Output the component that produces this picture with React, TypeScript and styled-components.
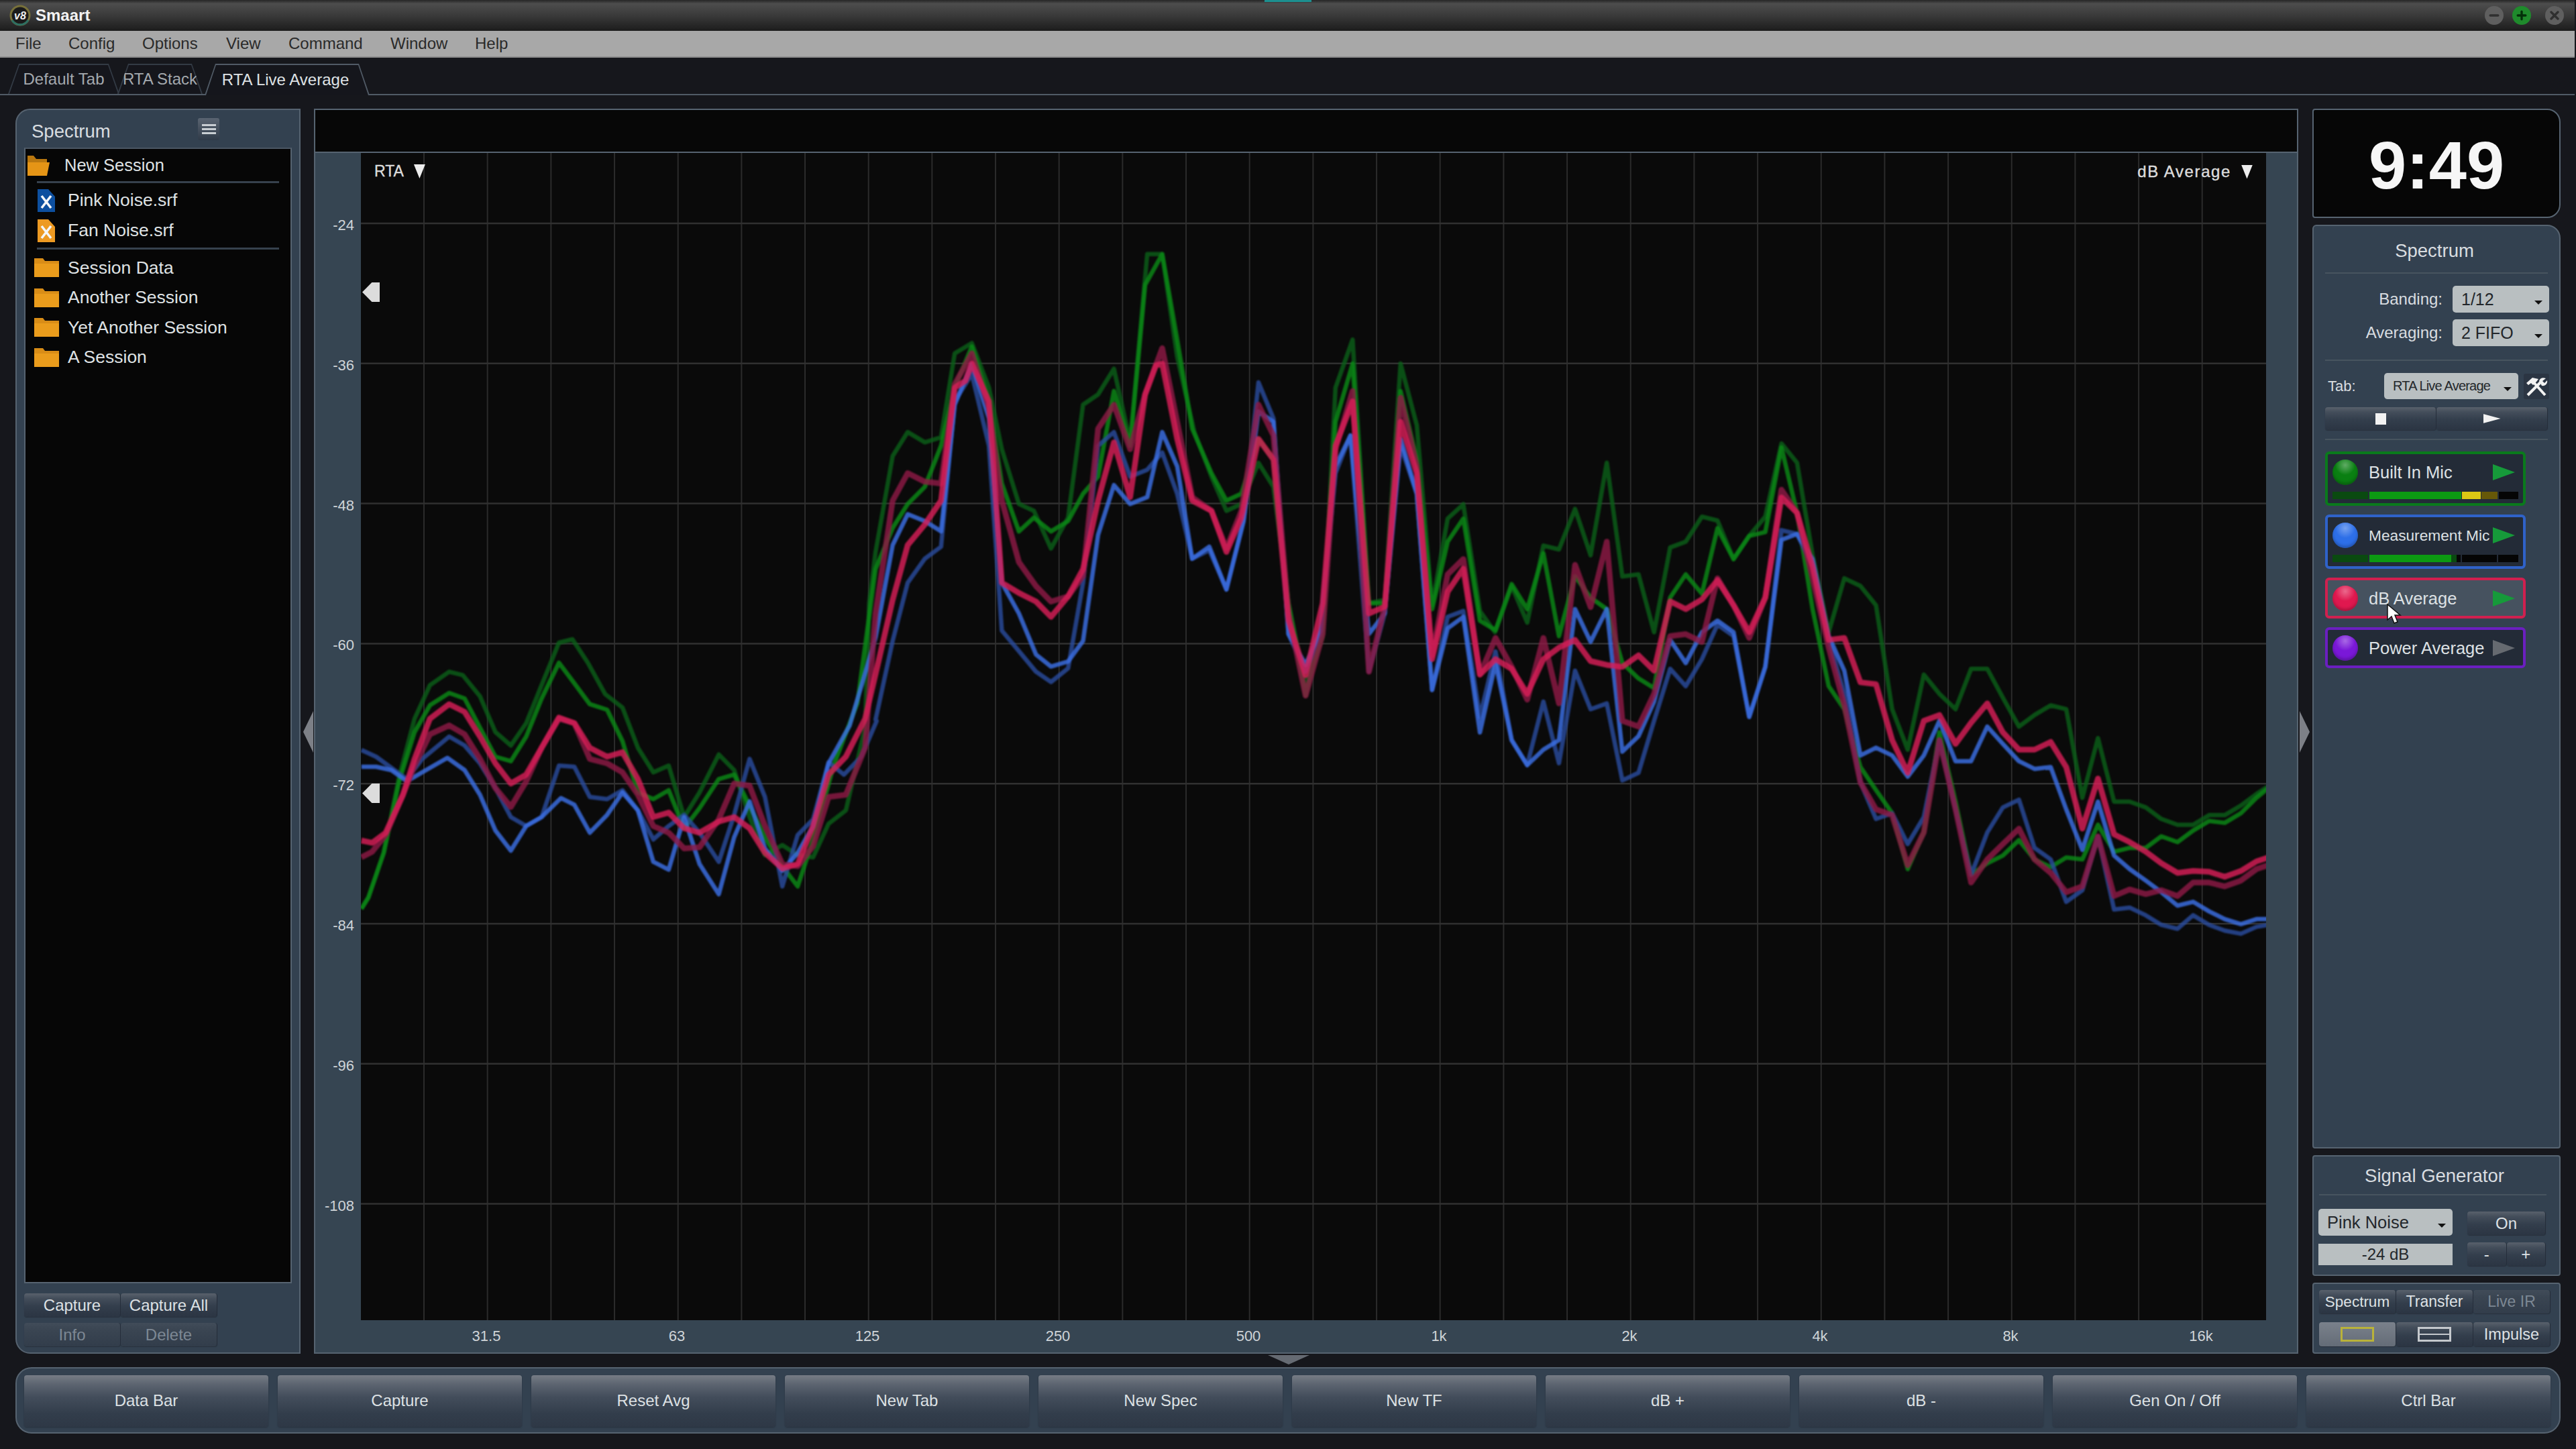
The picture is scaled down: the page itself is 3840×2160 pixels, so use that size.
import React from "react";
import styled, {createGlobalStyle} from "styled-components";
import {Minus, Plus, X} from "lucide-react";

const GlobalStyle = createGlobalStyle`
  html, body {
    margin: 0;
    padding: 0;
    width: 3840px;
    height: 2160px;
    overflow: hidden;
    background: #16171c;
    font-family: "Liberation Sans", Arial, sans-serif;
    color: #d9dde0;
  }
  * { box-sizing: border-box; }
`;

const panelBg = "#334150";
const panelLine = "#566370";

const Shell = styled.div`
  position: relative;
  width: 3840px;
  height: 2160px;
  display: flex;
  flex-direction: column;
  background: #16171c;
`;

const TitleBar = styled.div`
  position: relative;
  height: 46px;
  width: 3838px;
  display: flex;
  align-items: center;
  padding-left: 14px;
  background: linear-gradient(#262626 0%, #4d4d4d 12%, #3a3a3a 50%, #1c1c1c 100%);
`;

const TealMark = styled.div`
  position: absolute;
  left: 1885px;
  top: 0;
  width: 70px;
  height: 3px;
  background: #1c8f8f;
`;

const AppName = styled.div`
  margin-left: 7px;
  font-size: 24px;
  font-weight: 700;
  color: #f2f2f2;
`;

const WindowButtons = styled.div`
  margin-left: auto;
  display: flex;
  align-items: center;
  margin-right: 16px;
`;

const WindowButton = styled.div<{ $green?: boolean; $gap: number }>`
  width: 28px;
  height: 28px;
  margin-left: ${p => p.$gap}px;
  border-radius: 50%;
  display: flex;
  align-items: center;
  justify-content: center;
  background: ${p => p.$green ? "#1f8a2c" : "#5f5f5f"};
  color: ${p => p.$green ? "#04300a" : "#2f2f2f"};
`;

const MenuBar = styled.div`
  height: 40px;
  width: 3838px;
  display: flex;
  align-items: center;
  padding-left: 23px;
  background: #a8a8a8;
  border-bottom: 2px solid #8d8d8d;
  color: #2a2a2a;
  font-size: 24px;
`;

const MenuItem = styled.span<{ $w: number }>`
  width: ${p => p.$w}px;
`;

const TabRow = styled.div`
  height: 56px;
  width: 3838px;
  padding: 9px 0 0 12px;
  display: flex;
  border-bottom: 2px solid #515b66;
`;

const Tab = styled.div<{ $w: number; $gap?: number; $active?: boolean }>`
  position: relative;
  width: ${p => p.$w}px;
  margin-left: ${p => p.$gap || 0}px;
  height: ${p => p.$active ? 47 : 45}px;
  padding-right: ${p => p.$active ? 5 : 0}px;
  display: flex;
  align-items: center;
  justify-content: center;
  font-size: 24px;
  color: ${p => p.$active ? "#dfe2e5" : "#a4a9ae"};
  background: ${p => p.$active ? "#515b66" : "#333b45"};
  clip-path: polygon(16px 0, calc(100% - 16px) 0, 100% 100%, 0 100%);

  &::before {
    content: "";
    position: absolute;
    inset: 2px 2px 0 2px;
    background: #15161c;
    clip-path: polygon(15px 0, calc(100% - 15px) 0, 100% 100%, 0 100%);
  }

  span {
    position: relative;
  }
`;

const Main = styled.div`
  position: relative;
  margin: 20px 0 0 23px;
  width: 3794px;
  height: 1856px;
  display: flex;
`;

const SidePanel = styled.div`
  width: 425px;
  display: flex;
  flex-direction: column;
  padding: 0 11px 9px;
  background: ${panelBg};
  border: 2px solid ${panelLine};
  border-radius: 22px 0 0 22px;
`;

const SideHeader = styled.div`
  height: 56px;
  flex: none;
  display: flex;
  align-items: center;
  padding-left: 11px;
  font-size: 27.5px;
  position: relative;

  span {
    padding-top: 7px;
  }
`;

const HeaderMenu = styled.div`
  position: absolute;
  left: 259px;
  top: 12px;
  width: 32px;
  height: 33px;
  border-radius: 3px;
  background: linear-gradient(#5a6471, #2f3a48);
  display: flex;
  flex-direction: column;
  justify-content: center;
  align-items: center;
  gap: 3px;

  i {
    display: block;
    width: 21px;
    height: 3px;
    background: #c9ced3;
  }
`;

const SessionList = styled.div`
  flex: 1;
  background: #060606;
  border: 2px solid ${panelLine};
  border-top-color: #4a5663;
`;

const ListRow = styled.div<{ $h: number; $pad: number; $gap: number; $size?: number }>`
  height: ${p => p.$h}px;
  padding-left: ${p => p.$pad}px;
  display: flex;
  align-items: center;
  gap: ${p => p.$gap}px;
  font-size: ${p => p.$size || 26.5}px;
  color: #dfe2e4;

  svg {
    flex: none;
  }
`;

const ListDivider = styled.div<{ $top?: number; $bottom?: number }>`
  height: 3px;
  margin: ${p => p.$top || 0}px 17px ${p => p.$bottom || 0}px;
  background: #36414d;
`;

const SideFooter = styled.div`
  flex: none;
  padding-top: 15px;
  display: grid;
  grid-template-columns: 144px 144px;
  grid-auto-rows: 35px;
  row-gap: 9px;
`;

const Btn = styled.div<{ $dim?: boolean; $size?: number }>`
  display: flex;
  align-items: center;
  justify-content: center;
  font-size: ${p => p.$size || 24}px;
  color: ${p => p.$dim ? "#7d8894" : "#dde1e4"};
  border-radius: 4px;
  border-right: 1px solid #252e3a;
  background: linear-gradient(#59616c 0%, #434d5a 22%, #333e4c 55%, #2b3543 100%);
  box-shadow: 0 1px 1px #28313c;
`;

const DimBtn = styled(Btn)`
  background: linear-gradient(#414c59 0%, #3a4552 30%, #323d4b 100%);
`;

const PlotPanel = styled.div`
  width: 2958px;
  margin-left: 20px;
  display: flex;
  flex-direction: column;
  background: #364552;
  border: 2px solid ${panelLine};
`;

const PlotHead = styled.div`
  height: 64px;
  flex: none;
  background: #070707;
  border-bottom: 2px solid ${panelLine};
`;

const PlotBody = styled.div`
  height: 1740px;
  flex: none;
  display: flex;
`;

const YAxis = styled.div`
  width: 68px;
  flex: none;
  padding: 0.6px 10px 0 0;
`;

const YLabel = styled.div`
  height: 208.8px;
  padding-top: 6px;
  display: flex;
  align-items: center;
  justify-content: flex-end;
  font-size: 22px;
  color: #cfd4d8;
`;

const Chart = styled.div`
  position: relative;
  width: 2840px;
  flex: none;
  background: #0a0a0a;

  svg {
    display: block;
  }
`;

const TraceGroup = styled.g`
  filter: blur(0.8px);
`;

const ChartTag = styled.div<{ $right?: boolean }>`
  position: absolute;
  top: 14px;
  ${p => p.$right
    ? "right: 20px; font-size: 24px; letter-spacing: 1.6px;"
    : "left: 20px; font-size: 23px;"}
  display: flex;
  align-items: center;
  gap: 15px;
  color: #dcdcdc;
  -webkit-text-stroke: 0.4px #dcdcdc;
`;

const DownTriangle = styled.i`
  display: block;
  width: 17px;
  height: 21px;
  background: #ededed;
  clip-path: polygon(0 0, 100% 0, 50% 100%);
`;

const ThresholdMarker = styled.div<{ $top: number }>`
  position: absolute;
  left: 2px;
  top: ${p => p.$top}px;
  width: 26px;
  height: 29px;
  background: #dcdcdc;
  clip-path: polygon(55% 0, 100% 0, 100% 100%, 55% 100%, 0 50%);
`;

const XAxis = styled.div`
  flex: 1;
  padding-left: 113px;
  display: flex;
  align-items: center;
`;

const XLabel = styled.div`
  width: 284px;
  flex: none;
  text-align: center;
  font-size: 22px;
  color: #cfd4d8;
`;

const RightColumn = styled.div`
  width: 370px;
  margin-left: 21px;
  display: flex;
  flex-direction: column;
  gap: 10px;
`;

const ClockPanel = styled.div`
  height: 163px;
  flex: none;
  display: flex;
  align-items: center;
  justify-content: center;
  background: #060606;
  border: 2px solid ${panelLine};
  border-radius: 4px 20px 20px 4px;
  font-size: 101px;
  font-weight: 700;
  color: #f6f6f6;
  padding-top: 6px;
`;

const InfoPanel = styled.div<{ $h?: number; $corners?: string }>`
  ${p => p.$h ? `height: ${p.$h}px; flex: none;` : "flex: 1;"}
  display: flex;
  flex-direction: column;
  background: ${panelBg};
  border: 2px solid ${panelLine};
  border-radius: ${p => p.$corners || "4px"};
`;

const PanelBody = styled.div`
  padding: 0 17px;
  display: flex;
  flex-direction: column;
`;

const PanelTitle = styled.div<{ $h: number; $size: number }>`
  height: ${p => p.$h}px;
  flex: none;
  padding: 4px 6px 0 0;
  display: flex;
  align-items: center;
  justify-content: center;
  font-size: ${p => p.$size}px;
  color: #d9dde0;
`;

const Rule = styled.div<{ $before?: number; $after: number }>`
  height: 2px;
  flex: none;
  margin-top: ${p => p.$before || 0}px;
  margin-bottom: ${p => p.$after}px;
  background: #47545f;
`;

const GenRule = styled(Rule)`
  margin-left: 8px;
  margin-right: 19px;
`;

const SelectRow = styled.div<{ $h?: number }>`
  display: flex;
  align-items: center;
  justify-content: flex-end;
  height: ${p => p.$h || 40}px;
  flex: none;
  margin-bottom: 10px;
  margin-right: -2px;
  font-size: 24px;
`;

const Select = styled.div<{ $w: number; $size?: number; $h?: number }>`
  position: relative;
  width: ${p => p.$w}px;
  height: ${p => p.$h ? `${p.$h}px` : "100%"};
  flex: none;
  padding-left: 13px;
  display: flex;
  align-items: center;
  background: #b9bfc1;
  border-radius: 5px;
  color: #23272b;
  font-size: ${p => p.$size || 25}px;

  &::after {
    content: "";
    position: absolute;
    right: 10px;
    top: 54%;
    border: 6px solid transparent;
    border-top: 6px solid #111;
    border-bottom: 0;
  }
`;

const TabSelect = styled(Select)`
  letter-spacing: -0.8px;
`;

const RowLabel = styled.span`
  margin-right: 15px;
`;

const TabLabel = styled.span`
  font-size: 22px;
  width: 88px;
  padding-left: 4px;
`;

const ToolButton = styled.div`
  width: 38px;
  height: 38px;
  margin-left: 8px;
  flex: none;
  display: flex;
  align-items: center;
  justify-content: center;
  background: #2b3543;
  border-radius: 3px;
`;

const Transport = styled.div`
  height: 34px;
  margin: 2px 0 13px;
  flex: none;
  display: grid;
  grid-template-columns: 1fr 1fr;
`;

const StopGlyph = styled.i`
  display: block;
  width: 16px;
  height: 17px;
  background: #f2f2f2;
`;

const PlayGlyph = styled.i`
  display: block;
  width: 26px;
  height: 14px;
  background: #f2f2f2;
  clip-path: polygon(0 0, 100% 50%, 0 100%);
`;

const ChannelList = styled.div`
  display: flex;
  flex-direction: column;
  gap: 13px;
  margin-top: 17px;
`;

const Channel = styled.div<{ $color: string; $hover?: boolean; $h: number }>`
  position: relative;
  width: 299px;
  height: ${p => p.$h}px;
  padding: 8px 7px 0;
  border: 4px solid ${p => p.$color};
  border-radius: 6px;
  background: ${p => p.$hover ? "#46525f" : "#232b37"};
`;

const ChannelTop = styled.div`
  display: flex;
  align-items: center;
  height: 38px;
`;

const ChannelDot = styled.div<{ $color: string }>`
  width: 38px;
  height: 38px;
  flex: none;
  border-radius: 50%;
  background: radial-gradient(circle at 50% 22%, rgba(255, 255, 255, .35) 0%, rgba(255, 255, 255, 0) 42%), ${p => p.$color};
  box-shadow: inset 0 -3px 4px rgba(0, 0, 0, .25);
`;

const ChannelName = styled.div<{ $tight?: boolean }>`
  margin-left: 16px;
  font-size: ${p => p.$tight ? 22.7 : 25.5}px;
  white-space: nowrap;
  color: #dde1e4;
`;

const ChannelPlay = styled.div<{ $off?: boolean }>`
  position: absolute;
  left: 246px;
  top: 15px;
  width: 33px;
  height: 24px;
  background: ${p => p.$off ? "#666a70" : "#169a3a"};
  clip-path: polygon(0 0, 100% 50%, 0 100%);
`;

const Meter = styled.div`
  margin-top: 10px;
  height: 11px;
  display: flex;
`;

const MeterSeg = styled.div<{ $w: number; $c: string; $gap?: number }>`
  width: ${p => p.$w}px;
  margin-left: ${p => p.$gap || 0}px;
  background: ${p => p.$c};
  flex: none;
`;

const Pointer = styled.svg`
  position: absolute;
  left: 87px;
  top: 35px;
`;

const GenBody = styled.div`
  margin-top: 20px;
  padding-left: 7px;
  display: flex;
`;

const GenLeft = styled.div`
  width: 200px;
  display: flex;
  flex-direction: column;
`;

const GenRight = styled.div`
  width: 117px;
  margin: 4px 0 0 22px;
  display: grid;
  grid-template-columns: 1fr 1fr;
  grid-template-rows: 35px 35px;
  row-gap: 11px;
`;

const GenValue = styled.div`
  height: 32px;
  margin-top: 12px;
  display: flex;
  align-items: center;
  justify-content: center;
  background: #b9bfc1;
  color: #23272b;
  font-size: 24px;
`;

const WideBtn = styled(Btn)`
  grid-column: span 2;
`;

const ModeGrid = styled.div`
  margin: 9px 0 0 8px;
  width: 345px;
  display: grid;
  grid-template-columns: repeat(3, 115px);
  grid-template-rows: 35px 36px;
  row-gap: 13px;
`;

const ActiveBtn = styled(Btn)`
  background: linear-gradient(#7a818b, #646c77);
`;

const LayoutRect = styled.div<{ $active?: boolean; $split?: boolean }>`
  width: 50px;
  height: 22px;
  border: 3px solid ${p => p.$active ? "#b9b23a" : "#c4c8cc"};
  background: ${p => p.$split
    ? "linear-gradient(transparent 7px, #c4c8cc 7px, #c4c8cc 9px, transparent 9px)"
    : "transparent"};
`;

const BottomBar = styled.div`
  margin: 20px 0 0 23px;
  width: 3794px;
  height: 99px;
  padding: 10px 13px 0 11px;
  background: ${panelBg};
  border: 2px solid ${panelLine};
  border-radius: 24px;
  display: grid;
  grid-template-columns: repeat(10, 1fr);
  column-gap: 14px;
`;

const BarBtn = styled.div`
  height: 77px;
  padding-bottom: 2px;
  display: flex;
  align-items: center;
  justify-content: center;
  font-size: 24px;
  color: #dde1e4;
  border-radius: 4px;
  background: linear-gradient(#767c85 0%, #5c6470 18%, #434d5b 42%, #323d4b 75%, #2e3846 100%);
  box-shadow: 0 1px 2px #28313c;
`;

const SideArrow = styled.div<{ $left: number; $flip?: boolean }>`
  position: absolute;
  left: ${p => p.$left}px;
  top: 898px;
  width: 15px;
  height: 62px;
  background: #7d8087;
  clip-path: ${p => p.$flip
    ? "polygon(0 0, 100% 50%, 0 100%)"
    : "polygon(100% 0, 100% 100%, 0 50%)"};
`;

const BottomArrow = styled.div`
  position: absolute;
  left: 1867px;
  top: 1858px;
  width: 62px;
  height: 14px;
  background: #666b73;
  clip-path: polygon(0 0, 100% 0, 50% 100%);
`;

// traces were read off three crops of the plot, so each crop keeps its own offset + scale
const crops = {
  a: {x: 440, y: 900, sx: 1.742, sy: 3},
  b: {x: 1200, y: 340, sx: 1.568, sy: 1.96},
  c: {x: 2100, y: 600, sx: 1.206, sy: 1.742},
};

const toPage = (raw: string, c: { x: number; y: number; sx: number; sy: number }) =>
  raw.trim().split(/\s+/).map(pair => {
    const [px, py] = pair.split(",").map(Number);
    return `${(c.x + px / c.sx).toFixed(1)},${(c.y + py / c.sy).toFixed(1)}`;
  }).join(" ");

const trace = (a: string, b: string, c: string) =>
  [toPage(a, crops.a), toPage(b, crops.b), toPage(c, crops.c)].join(" ");

const traces = [
  {
    color: "#0b5f18", width: 6.5, points: trace(
      "172,1370 190,1320 230,1120 270,780 310,520 350,370 400,310 435,325 480,420 520,580 560,640 600,540 640,370 685,180 720,165 760,270 805,410 850,470 890,650 930,760 970,730 1010,960 1050,850 1100,680 1140,750 1180,960 1220,1130 1265,1085 1305,1130 1345,1140 1385,990 1430,930 1480,560",
      "150,1100 165,950 205,670 240,600 280,630 318,615 350,370 390,340 430,470 460,650 500,810 535,830 575,940 615,850 650,520 685,490 722,415 760,630 800,80 835,80 870,380 910,600 950,730 985,830 1020,810 1060,690 1095,760 1130,1100 1170,1340 1210,1200 1240,470 1280,330 1318,1100 1355,1090 1392,400 1430,580",
      "42,530 70,305 98,268 128,545 155,600 185,480 213,575 242,375 270,385 299,280 327,400 356,160 384,455 413,450 441,600 470,380 498,365 527,300 555,310 584,410 612,350 641,300 670,110 698,160 726,400 755,600 783,460 812,480 840,530 869,800 897,905 926,710 954,760 983,800 1011,695 1040,695 1068,770 1097,845 1125,815 1154,790 1182,800 1211,1030 1239,875 1268,1040 1296,1040 1325,1055 1353,1085 1382,1100 1410,1100 1439,1075 1467,1075 1496,1050 1524,1020 1545,1000"
    )
  },
  {
    color: "#0b8a16", width: 6.5, points: trace(
      "172,1370 190,1320 230,1120 270,800 310,580 350,460 400,405 440,430 480,560 520,690 560,710 600,600 640,430 685,270 720,350 765,455 810,480 850,620 890,850 930,880 970,840 1010,1010 1050,920 1100,790 1140,770 1180,910 1220,1050 1265,1180 1305,1270 1345,1060 1400,720 1460,450",
      "165,1000 205,880 240,810 280,760 318,640 350,470 390,350 430,510 460,750 500,890 535,850 575,890 615,860 650,780 685,730 722,480 760,640 795,170 835,80 870,330 905,590 950,720 985,800 1020,780 1060,620 1095,680 1130,1100 1170,1370 1210,1170 1240,570 1280,400 1318,1100 1355,1100 1392,480 1430,680",
      "42,540 70,365 98,305 128,570 156,595 185,475 213,540 242,395 270,610 299,455 327,510 356,540 384,680 413,720 441,745 470,510 498,450 527,500 555,330 584,410 612,350 641,340 670,120 698,290 726,540 755,740 783,800 812,950 840,1010 869,1070 897,1215 926,1120 954,860 983,1040 1011,1230 1040,1200 1068,1180 1097,1140 1125,1190 1154,1210 1182,1185 1211,1190 1239,1100 1268,1170 1296,1160 1325,1160 1353,1130 1382,1145 1410,1115 1439,1090 1467,1095 1496,1070 1524,1030 1545,1005"
    )
  },
  {
    color: "#2a4c9e", width: 6.5, points: trace(
      "172,660 210,690 250,740 290,790 330,700 400,600 440,640 480,720 520,830 560,960 600,1000 640,960 685,730 725,735 765,870 810,880 850,840 890,930 930,1060 970,1000 1010,950 1050,1030 1100,1160 1140,950 1180,700 1220,870 1265,1270 1305,1040 1345,970 1385,715 1425,770 1470,690 1510,530",
      "165,1440 205,1210 240,1040 280,970 318,935 350,510 390,430 430,640 460,1180 500,1240 540,1300 575,1330 615,1290 650,1040 685,640 722,600 760,730 800,710 835,660 870,780 905,970 945,945 985,1060 1025,860 1060,455 1095,560 1130,1190 1170,1300 1205,1190 1240,720 1275,610 1318,1300 1355,1130 1392,640 1430,780",
      "42,750 70,560 98,545 128,820 156,650 185,880 213,945 242,780 270,940 299,700 327,800 356,785 384,985 413,965 441,830 470,695 498,740 527,670 555,580 584,610 612,820 641,690 670,335 698,345 726,430 755,620 783,760 812,990 840,1085 869,1070 897,1150 926,1080 954,880 983,1060 1011,1230 1040,1120 1068,1055 1097,1035 1125,1160 1154,1190 1182,1300 1211,1270 1239,1130 1268,1320 1296,1315 1325,1335 1353,1360 1382,1370 1410,1335 1439,1360 1467,1375 1496,1383 1524,1365 1545,1360"
    )
  },
  {
    color: "#3c70e6", width: 6.5, points: trace(
      "172,735 210,735 250,750 290,800 330,760 395,695 440,750 480,860 520,1020 560,1110 600,1000 640,960 690,875 725,905 765,1030 810,950 850,850 890,930 930,1160 970,1195 1010,960 1050,1170 1100,1305 1140,1050 1180,890 1220,1100 1265,1200 1305,1120 1345,1000 1385,720 1440,550 1500,200",
      "165,1200 205,930 240,840 280,860 318,890 350,520 390,400 430,560 460,1040 500,1130 540,1250 575,1285 615,1270 650,1210 685,900 722,755 760,810 800,790 835,600 870,700 905,970 945,935 985,1060 1025,860 1060,540 1095,570 1130,1190 1170,1280 1205,1180 1240,700 1275,610 1318,1190 1355,1130 1392,620 1430,780",
      "42,750 70,590 98,560 128,860 156,680 185,880 213,945 242,905 270,880 299,540 327,625 356,540 384,910 413,870 441,780 470,620 498,680 527,600 555,570 584,600 612,820 641,690 670,360 698,345 726,410 755,610 783,700 812,920 840,900 869,920 897,975 926,920 954,830 983,935 1011,935 1040,845 1068,890 1097,935 1125,955 1154,950 1182,1060 1211,1165 1239,1040 1268,1180 1296,1215 1325,1245 1353,1275 1382,1310 1410,1300 1439,1325 1467,1345 1496,1358 1524,1345 1545,1345"
    )
  },
  {
    color: "#8e1a45", width: 8.5, points: trace(
      "172,1140 200,1115 235,1040 280,860 310,730 350,590 400,550 440,590 480,700 520,830 560,915 600,800 640,650 685,520 725,540 765,700 810,720 850,760 890,860 930,1000 970,1030 1010,1100 1050,1095 1100,970 1140,810 1180,820 1220,1000 1265,1170 1305,1180 1345,1090 1385,870 1430,860 1480,650",
      "165,1130 205,800 240,720 280,745 318,750 350,460 390,370 430,530 460,800 500,980 540,1050 575,1095 615,1080 650,1020 685,590 722,520 760,650 795,490 835,355 870,570 905,790 950,830 985,940 1020,830 1060,520 1095,610 1130,1130 1170,1370 1210,1190 1240,650 1280,480 1318,1300 1355,1110 1392,500 1430,700",
      "42,660 70,450 98,410 128,710 156,615 185,690 213,775 242,615 270,785 299,425 327,535 356,365 384,830 413,845 441,760 470,610 498,605 527,625 555,460 584,530 612,615 641,510 670,230 698,290 726,460 755,640 783,790 812,990 840,1060 869,1075 897,1205 926,1120 954,880 983,1060 1011,1250 1040,1190 1068,1150 1097,1110 1125,1190 1154,1225 1182,1275 1211,1260 1239,1130 1268,1285 1296,1268 1325,1280 1353,1270 1382,1285 1410,1250 1439,1250 1467,1260 1496,1245 1524,1215 1545,1205"
    )
  },
  {
    color: "#d81e58", width: 8.5, points: trace(
      "172,1065 200,1075 235,1030 280,860 310,700 350,520 400,455 440,490 480,600 520,720 560,810 600,770 640,650 685,515 725,540 765,650 810,690 850,670 890,790 930,960 970,940 1010,1010 1050,1030 1100,980 1140,960 1180,1010 1220,1120 1265,1190 1305,1170 1345,1000 1385,770 1430,690 1480,520",
      "170,1280 205,1090 240,930 280,870 318,800 350,470 375,450 390,400 430,510 460,1040 500,1070 540,1095 575,1140 615,1080 650,1000 685,800 722,630 760,790 795,490 820,405 835,400 870,620 905,800 950,830 985,950 1020,850 1060,620 1095,680 1130,1150 1170,1310 1210,1100 1240,640 1280,510 1318,1130 1355,1110 1392,570 1430,720",
      "42,670 70,495 98,435 128,710 156,670 185,695 213,760 242,670 270,640 299,620 327,675 356,685 384,690 413,660 441,700 470,520 498,540 527,515 555,465 584,530 612,600 641,510 670,250 698,290 726,430 755,620 783,615 812,730 840,735 869,880 897,965 926,830 954,815 983,890 1011,835 1040,785 1068,860 1097,905 1125,905 1154,885 1182,950 1211,1110 1239,980 1268,1125 1296,1145 1325,1170 1353,1200 1382,1225 1410,1220 1439,1222 1467,1235 1496,1220 1524,1195 1545,1185"
    )
  },
];

const dbLabels = ["-24", "-36", "-48", "-60", "-72", "-84", "-96", "-108"];
const freqLabels = ["31.5", "63", "125", "250", "500", "1k", "2k", "4k", "8k", "16k"];
const barButtons = ["Data Bar", "Capture", "Reset Avg", "New Tab", "New Spec", "New TF", "dB +", "dB -", "Gen On / Off", "Ctrl Bar"];
const menus: [string, number][] = [["File", 79], ["Config", 110], ["Options", 125], ["View", 93], ["Command", 152], ["Window", 126], ["Help", 80]];
const folders = ["Session Data", "Another Session", "Yet Another Session", "A Session"];

const gridX = Array.from({length: 29}, (_, i) => 632 + i * 94.67);
const gridY = dbLabels.map((_, i) => 335 + i * 208.8);

const Logo = () => (
  <svg width="32" height="34" viewBox="0 0 32 34">
    <circle cx="16" cy="17" r="14" fill="#1b1b1b" stroke="#77703a" strokeWidth="3"/>
    <path d="M4 24a14 14 0 0 0 24 0" fill="none" stroke="#2c6f63" strokeWidth="3"/>
    <text x="16" y="23" textAnchor="middle" fontSize="16" fontStyle="italic" fontWeight="700" fill="#eee">v8</text>
  </svg>
);

const OpenFolder = () => (
  <svg width="35" height="33" viewBox="0 0 35 33">
    <path d="M1 2h9l4 5h16v6H1z" fill="#b9770f"/>
    <path d="M1 32V12h33l-4 20z" fill="#e59516"/>
  </svg>
);

const ClosedFolder = () => (
  <svg width="39" height="30" viewBox="0 0 39 30">
    <path d="M1 1h13l3 4h21v24H1z" fill="#d98d17"/>
    <path d="M1 9h37v20H1z" fill="#ea9c1c"/>
  </svg>
);

const SessionFile = ({color}: { color: string }) => (
  <svg width="28" height="36" viewBox="0 0 28 36">
    <path d="M1 1h16l10 11v23H1z" fill={color}/>
    <path d="M7 11l14 18M21 11L7 29" stroke="#f4f6f8" strokeWidth="3.6" fill="none"/>
  </svg>
);

const ToolsIcon = () => (
  <svg width="34" height="30" viewBox="0 0 34 30">
    <path d="M12 8l18 20" stroke="#f2f2f2" strokeWidth="4" fill="none"/>
    <path d="M2 10l9-8 9 2-3 4-5 5-3-3-4 3z" fill="#f2f2f2"/>
    <path d="M4 28L24 8" stroke="#f2f2f2" strokeWidth="4" fill="none"/>
    <path d="M21 7c1-4 5-6 10-4l-5 4 3 3 4-4c1 5-3 9-8 8z" fill="#f2f2f2"/>
  </svg>
);

function Plot() {
  return (
    <svg width="2840" height="1740" viewBox="538 230 2840 1740">
      {gridX.map(x => <line key={x} x1={x} x2={x} y1={230} y2={1970} stroke="#2b2b2b" strokeWidth="2"/>)}
      {gridY.map(y => <line key={y} x1={538} x2={3378} y1={y} y2={y} stroke="#303030" strokeWidth="2.5"/>)}
      <TraceGroup>
        {traces.map(t => (
          <polyline key={t.color} points={t.points} fill="none" stroke={t.color} strokeWidth={t.width}
                    strokeLinejoin="round" opacity="0.82"/>
        ))}
      </TraceGroup>
    </svg>
  );
}

function App() {
  return <Shell>
    <GlobalStyle/>
    <TitleBar>
      <TealMark/>
      <Logo/>
      <AppName>Smaart</AppName>
      <WindowButtons>
        <WindowButton $gap={0}><Minus size={20} strokeWidth={4}/></WindowButton>
        <WindowButton $gap={13} $green><Plus size={20} strokeWidth={4}/></WindowButton>
        <WindowButton $gap={21}><X size={20} strokeWidth={4}/></WindowButton>
      </WindowButtons>
    </TitleBar>
    <MenuBar>
      {menus.map(([name, w]) => <MenuItem key={name} $w={w}>{name}</MenuItem>)}
    </MenuBar>
    <TabRow>
      <Tab $w={166}><span>Default Tab</span></Tab>
      <Tab $w={127} $gap={-3}><span>RTA Stack</span></Tab>
      <Tab $w={246} $gap={3} $active><span>RTA Live Average</span></Tab>
    </TabRow>

    <Main>
      <SidePanel>
        <SideHeader>
          <span>Spectrum</span>
          <HeaderMenu><i/><i/><i/></HeaderMenu>
        </SideHeader>
        <SessionList>
          <ListRow $h={48} $pad={2} $gap={21} $size={25.5}><OpenFolder/>New Session</ListRow>
          <ListDivider $bottom={3}/>
          <ListRow $h={45} $pad={17} $gap={18}><SessionFile color="#0d4f9f"/>Pink Noise.srf</ListRow>
          <ListRow $h={45} $pad={17} $gap={18}><SessionFile color="#ed9a22"/>Fan Noise.srf</ListRow>
          <ListDivider $top={3} $bottom={5}/>
          {folders.map(name => (
            <ListRow key={name} $h={44.5} $pad={12} $gap={12}><ClosedFolder/>{name}</ListRow>
          ))}
        </SessionList>
        <SideFooter>
          <Btn>Capture</Btn>
          <Btn>Capture All</Btn>
          <DimBtn $dim>Info</DimBtn>
          <DimBtn $dim>Delete</DimBtn>
        </SideFooter>
      </SidePanel>

      <PlotPanel>
        <PlotHead/>
        <PlotBody>
          <YAxis>
            {dbLabels.map(l => <YLabel key={l}>{l}</YLabel>)}
          </YAxis>
          <Chart>
            <Plot/>
            <ChartTag>RTA <DownTriangle/></ChartTag>
            <ChartTag $right>dB Average <DownTriangle/></ChartTag>
            <ThresholdMarker $top={193}/>
            <ThresholdMarker $top={940}/>
          </Chart>
        </PlotBody>
        <XAxis>
          {freqLabels.map(l => <XLabel key={l}>{l}</XLabel>)}
        </XAxis>
      </PlotPanel>

      <RightColumn>
        <ClockPanel>9:49</ClockPanel>
        <InfoPanel $corners="6px 20px 4px 4px">
          <PanelBody>
            <PanelTitle $h={69} $size={27.5}>Spectrum</PanelTitle>
            <Rule $after={18}/>
            <SelectRow><RowLabel>Banding:</RowLabel><Select $w={144}>1/12</Select></SelectRow>
            <SelectRow><RowLabel>Averaging:</RowLabel><Select $w={144}>2 FIFO</Select></SelectRow>
            <Rule $before={10} $after={18}/>
            <SelectRow $h={39}>
              <TabLabel>Tab:</TabLabel>
              <TabSelect $w={200} $size={20}>RTA Live Average</TabSelect>
              <ToolButton><ToolsIcon/></ToolButton>
            </SelectRow>
            <Transport>
              <Btn><StopGlyph/></Btn>
              <Btn><PlayGlyph/></Btn>
            </Transport>
            <Rule $after={0}/>
            <ChannelList>
              <Channel $color="#0a7a1c" $h={81}>
                <ChannelTop>
                  <ChannelDot $color="#0a7f12"/>
                  <ChannelName>Built In Mic</ChannelName>
                </ChannelTop>
                <ChannelPlay/>
                <Meter>
                  <MeterSeg $w={53} $c="#0a4a10"/>
                  <MeterSeg $w={137} $c="#0c9a12" $gap={2}/>
                  <MeterSeg $w={28} $c="#dcc814" $gap={1}/>
                  <MeterSeg $w={24} $c="#665808" $gap={1}/>
                  <MeterSeg $w={29} $c="#050505" $gap={2}/>
                </Meter>
              </Channel>
              <Channel $color="#2f62c9" $h={81}>
                <ChannelTop>
                  <ChannelDot $color="#2d6fe8"/>
                  <ChannelName $tight>Measurement Mic</ChannelName>
                </ChannelTop>
                <ChannelPlay/>
                <Meter>
                  <MeterSeg $w={53} $c="#0a4a10"/>
                  <MeterSeg $w={122} $c="#0c9a12" $gap={2}/>
                  <MeterSeg $w={8} $c="#0a4a10"/>
                  <MeterSeg $w={6} $c="#050505"/>
                  <MeterSeg $w={52} $c="#050505" $gap={2}/>
                  <MeterSeg $w={30} $c="#050505" $gap={2}/>
                </Meter>
              </Channel>
              <Channel $color="#d0204f" $h={61} $hover>
                <ChannelTop>
                  <ChannelDot $color="#e0184f"/>
                  <ChannelName>dB Average</ChannelName>
                </ChannelTop>
                <ChannelPlay/>
                <Pointer width="24" height="32" viewBox="0 0 24 32">
                  <path d="M2 1v23l6-5 4 10 5-2-4-10h8z" fill="#fff" stroke="#111" strokeWidth="1.5"/>
                </Pointer>
              </Channel>
              <Channel $color="#6b1fc0" $h={61}>
                <ChannelTop>
                  <ChannelDot $color="#7a18d8"/>
                  <ChannelName>Power Average</ChannelName>
                </ChannelTop>
                <ChannelPlay $off/>
              </Channel>
            </ChannelList>
          </PanelBody>
        </InfoPanel>
        <InfoPanel $h={180}>
          <PanelBody>
            <PanelTitle $h={53} $size={27.5}>Signal Generator</PanelTitle>
          </PanelBody>
          <GenRule $before={3} $after={0}/>
          <GenBody>
            <GenLeft>
              <Select $w={200} $size={25.5} $h={40}>Pink Noise</Select>
              <GenValue>-24 dB</GenValue>
            </GenLeft>
            <GenRight>
              <WideBtn>On</WideBtn>
              <Btn>-</Btn>
              <Btn>+</Btn>
            </GenRight>
          </GenBody>
        </InfoPanel>
        <InfoPanel $h={106} $corners="4px 4px 22px 4px">
          <ModeGrid>
            <Btn $size={22.5}>Spectrum</Btn>
            <Btn $size={23}>Transfer</Btn>
            <DimBtn $dim $size={23}>Live IR</DimBtn>
            <ActiveBtn><LayoutRect $active/></ActiveBtn>
            <Btn><LayoutRect $split/></Btn>
            <Btn $size={23.5}>Impulse</Btn>
          </ModeGrid>
        </InfoPanel>
      </RightColumn>

      <SideArrow $left={429}/>
      <SideArrow $left={3405} $flip/>
      <BottomArrow/>
    </Main>

    <BottomBar>
      {barButtons.map(b => <BarBtn key={b}>{b}</BarBtn>)}
    </BottomBar>
  </Shell>
}

export default App
